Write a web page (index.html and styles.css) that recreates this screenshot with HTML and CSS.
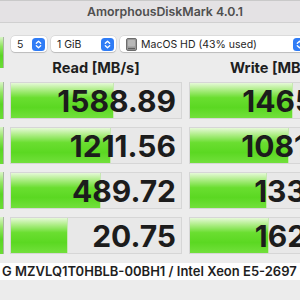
FILE: index.html
```html
<!DOCTYPE html>
<html>
<head>
  <meta charset="UTF-8">
  <link rel="stylesheet" href="styles.css">
</head>
<body>
  <div class="titlebar">AmorphousDiskMark 4.0.1</div>

  <div class="panel">
    <div class="btn all"></div>

    <!-- Selectores: repeticiones, tamaño, disco -->
    <div class="controls">
      <div class="popup count">
        <span class="label">5</span>
        <svg class="stepper" width="13" height="13" viewBox="0 0 13 13">
          <rect width="13" height="13" rx="3.5" fill="#2f7cf6"/>
          <path d="M4.3 5.3 L6.5 3.2 L8.7 5.3 M4.3 7.7 L6.5 9.8 L8.7 7.7" fill="none" stroke="#fff" stroke-width="1.3" stroke-linecap="round" stroke-linejoin="round"/>
        </svg>
      </div>
      <div class="popup size">
        <span class="label">1 GiB</span>
        <svg class="stepper" width="13" height="13" viewBox="0 0 13 13">
          <rect width="13" height="13" rx="3.5" fill="#2f7cf6"/>
          <path d="M4.3 5.3 L6.5 3.2 L8.7 5.3 M4.3 7.7 L6.5 9.8 L8.7 7.7" fill="none" stroke="#fff" stroke-width="1.3" stroke-linecap="round" stroke-linejoin="round"/>
        </svg>
      </div>
      <div class="popup disk">
        <svg class="drive" width="11" height="13" viewBox="0 0 11 13">
          <rect x="0.5" y="0.5" width="10" height="12" rx="1.5" fill="#9a9a9a" stroke="#6d6d6d"/>
          <rect x="2" y="2" width="7" height="6.5" rx="0.8" fill="#b9b9b9"/>
          <rect x="2" y="10" width="7" height="1.2" fill="#5f5f5f"/>
        </svg>
        <span class="label">MacOS HD (43% used)</span>
        <svg class="stepper" width="13" height="13" viewBox="0 0 13 13">
          <rect width="13" height="13" rx="3.5" fill="#2f7cf6"/>
          <path d="M4.3 5.3 L6.5 3.2 L8.7 5.3 M4.3 7.7 L6.5 9.8 L8.7 7.7" fill="none" stroke="#fff" stroke-width="1.3" stroke-linecap="round" stroke-linejoin="round"/>
        </svg>
      </div>
    </div>

    <div class="head read">Read [MB/s]</div>
    <div class="head write">Write [MB/s]</div>

    <!-- Resultados -->
    <div class="btn"></div>
    <div class="cell read"><div class="bar" style="width: 103px"></div><div class="value">1588.89</div></div>
    <div class="cell write"><div class="bar" style="width: 103px"></div><div class="value">1465.61</div></div>

    <div class="btn"></div>
    <div class="cell read"><div class="bar" style="width: 100px"></div><div class="value">1211.56</div></div>
    <div class="cell write"><div class="bar" style="width: 99px"></div><div class="value">1081.92</div></div>

    <div class="btn"></div>
    <div class="cell read"><div class="bar" style="width: 90px"></div><div class="value">489.72</div></div>
    <div class="cell write"><div class="bar" style="width: 77px"></div><div class="value">133.48</div></div>

    <div class="btn"></div>
    <div class="cell read"><div class="bar" style="width: 57px"></div><div class="value">20.75</div></div>
    <div class="cell write"><div class="bar" style="width: 79px"></div><div class="value">162.30</div></div>
  </div>

  <div class="device">G MZVLQ1T0HBLB-00BH1 / Intel Xeon E5-2697 v2</div>
</body>
</html>
```

FILE: styles.css
```css
* {
  margin: 0;
  padding: 0;
  box-sizing: border-box;
}

html, body {
  overflow: hidden;
}

body {
  width: 300px;
  height: 300px;
  background: #ececec;
  font-family: Inter, "Noto Sans", sans-serif;
  color: #1e1e1e;
}

.titlebar {
  height: 23px;
  line-height: 22px;
  padding-left: 87px;
  background: #e4e2e4;
  border-top: 1px solid #c9c9c9;
  border-bottom: 1px solid #d0d0d0;
  font-size: 12.3px;
  font-weight: 600;
  color: #4f4f4f;
  white-space: nowrap;
}

.panel {
  display: grid;
  grid-template-columns: 4px 6px 172px 7px 172px;
  grid-template-rows: 16px 14px repeat(4, 37px);
  row-gap: 8px;
  padding-top: 13px;
  width: 361px;
}

.btn {
  grid-column: 1;
  background: linear-gradient(#d9f5c6 0%, #8fe45e 30%, #5ad624 60%, #6bdc36 100%);
  border-right: 1px solid #a9b8a2;
}

.btn.all {
  grid-row: 1 / 3;
  height: 31px;
  align-self: start;
  margin-top: 1px;
}

.controls {
  grid-column: 3 / 6;
  grid-row: 1;
  display: flex;
  gap: 4px;
  padding-left: 1px;
}

.popup {
  display: flex;
  align-items: center;
  height: 16px;
  padding: 0 2px 0 6px;
  background: #fff;
  border-radius: 4px;
  box-shadow: 0 0 0 0.5px rgba(0, 0, 0, 0.14), 0 1px 1px rgba(0, 0, 0, 0.14);
  font-size: 10.5px;
  white-space: nowrap;
}

.popup .label {
  flex: 1;
}

.count {
  width: 36px;
}

.size {
  width: 65px;
}

.disk {
  width: 188px;
}

.drive {
  margin-right: 4px;
}

.head {
  grid-row: 2;
  text-align: center;
  font-size: 14.6px;
  font-weight: 700;
  line-height: 14px;
  padding-top: 1px;
  white-space: nowrap;
}

.read {
  grid-column: 3;
}

.write {
  grid-column: 5;
}

.cell {
  position: relative;
  background: #e8e8e8;
  border: 1px solid #d6d6d6;
  overflow: hidden;
}

.bar {
  position: absolute;
  left: 0;
  top: 0;
  bottom: 0;
  background: linear-gradient(#e6f9d8 0%, #b2ee8c 18%, #6ade30 42%, #5bd822 70%, #72e03c 100%);
  border-right: 1px solid #c6e8b2;
}

.value {
  position: relative;
  text-align: right;
  padding: 1px 5px 0 0;
  font-size: 30px;
  font-weight: 700;
  line-height: 35px;
  color: #1c1c1c;
  white-space: nowrap;
}

.device {
  margin-top: 9px;
  height: 17px;
  line-height: 17px;
  padding-left: 2px;
  background: #fff;
  font-size: 13px;
  font-weight: 600;
  white-space: nowrap;
}
```
